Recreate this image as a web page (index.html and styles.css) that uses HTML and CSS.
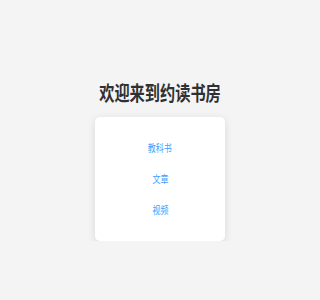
FILE: index.html
```html
<!DOCTYPE html>
<html lang="zh">
<head>
<meta charset="utf-8">
<title>约读书房</title>
<link rel="stylesheet" href="styles.css">
</head>
<body>
<div class="page">
  <h1 class="title"><span class="squeeze">欢迎来到约读书房</span></h1>
  <div class="card">
    <a class="link" href="#"><span class="squeeze">教科书</span></a>
    <a class="link" href="#"><span class="squeeze">文章</span></a>
    <a class="link" href="#"><span class="squeeze">视频</span></a>
  </div>
</div>
</body>
</html>
```

FILE: styles.css
```css
html, body {
  margin: 0;
  padding: 0;
  background: #f4f4f4;
  font-family: "Noto Sans CJK SC", "Noto Sans", sans-serif;
}
.page {
  display: flex;
  flex-direction: column;
  align-items: center;
  padding-top: 81px;
}
.title {
  margin: 0 0 12px;
  font-size: 20px;
  line-height: 24px;
  font-weight: 700;
  color: #2f3033;
  text-align: center;
}
.squeeze {
  display: inline-block;
  transform: scaleX(0.76);
  transform-origin: center;
}
.card {
  width: 130px;
  box-sizing: border-box;
  padding: 15px 0 16px;
  background: #ffffff;
  border-radius: 5px;
  box-shadow: 0 2px 8px rgba(0, 0, 0, 0.12);
  display: flex;
  flex-direction: column;
  align-items: center;
}
.link {
  display: flex;
  align-items: center;
  justify-content: center;
  height: 31px;
  font-size: 10.5px;
  color: #409eff;
  text-decoration: none;
}
```
